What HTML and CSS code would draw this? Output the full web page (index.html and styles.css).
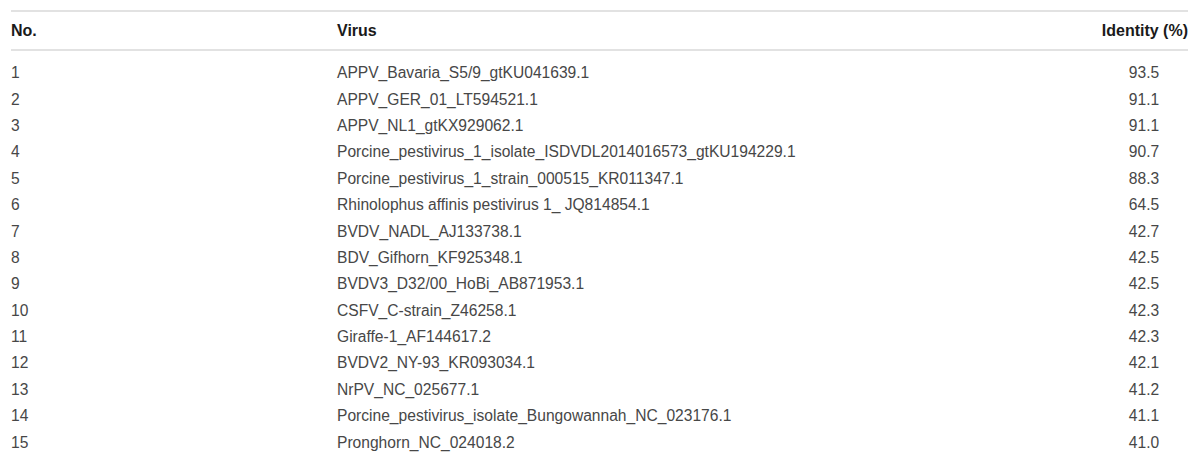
FILE: index.html
```html
<!DOCTYPE html>
<html>
<head>
<meta charset="utf-8">
<link rel="stylesheet" href="styles.css">
</head>
<body>
<table class="data">
  <colgroup>
    <col class="c-no">
    <col class="c-virus">
    <col class="c-id">
  </colgroup>
  <thead>
    <tr><th class="no">No.</th><th class="virus">Virus</th><th class="id">Identity (%)</th></tr>
  </thead>
  <tbody>
    <tr><td>1</td><td>APPV_Bavaria_S5/9_gtKU041639.1</td><td class="id">93.5</td></tr>
    <tr><td>2</td><td>APPV_GER_01_LT594521.1</td><td class="id">91.1</td></tr>
    <tr><td>3</td><td>APPV_NL1_gtKX929062.1</td><td class="id">91.1</td></tr>
    <tr><td>4</td><td>Porcine_pestivirus_1_isolate_ISDVDL2014016573_gtKU194229.1</td><td class="id">90.7</td></tr>
    <tr><td>5</td><td>Porcine_pestivirus_1_strain_000515_KR011347.1</td><td class="id">88.3</td></tr>
    <tr><td>6</td><td>Rhinolophus affinis pestivirus 1_ JQ814854.1</td><td class="id">64.5</td></tr>
    <tr><td>7</td><td>BVDV_NADL_AJ133738.1</td><td class="id">42.7</td></tr>
    <tr><td>8</td><td>BDV_Gifhorn_KF925348.1</td><td class="id">42.5</td></tr>
    <tr><td>9</td><td>BVDV3_D32/00_HoBi_AB871953.1</td><td class="id">42.5</td></tr>
    <tr><td>10</td><td>CSFV_C-strain_Z46258.1</td><td class="id">42.3</td></tr>
    <tr><td>11</td><td>Giraffe-1_AF144617.2</td><td class="id">42.3</td></tr>
    <tr><td>12</td><td>BVDV2_NY-93_KR093034.1</td><td class="id">42.1</td></tr>
    <tr><td>13</td><td>NrPV_NC_025677.1</td><td class="id">41.2</td></tr>
    <tr><td>14</td><td>Porcine_pestivirus_isolate_Bungowannah_NC_023176.1</td><td class="id">41.1</td></tr>
    <tr><td>15</td><td>Pronghorn_NC_024018.2</td><td class="id">41.0</td></tr>
  </tbody>
</table>
</body>
</html>
```

FILE: styles.css
```css
html, body {
  margin: 0;
  padding: 0;
  background: #ffffff;
}
body {
  padding: 10px 12px 0 11px;
  font-family: "Liberation Sans", Arial, Helvetica, sans-serif;
  color: #474747;
}
.data {
  width: 100%;
  border-collapse: collapse;
  table-layout: fixed;
  font-size: 15.6px;
}
.c-no { width: 326px; }
.c-id { width: 88px; }
.data thead tr {
  border-top: 2px solid #e2e2e2;
  border-bottom: 2px solid #e2e2e2;
}
.data th {
  height: 37px;
  padding: 0;
  font-size: 16px;
  font-weight: bold;
  color: #1a1a1a;
  text-align: left;
  vertical-align: middle;
}
.data th.id {
  text-align: right;
  white-space: nowrap;
}
.data td {
  height: 26.4px;
  padding: 0;
  vertical-align: middle;
  white-space: nowrap;
}
.data tbody tr:first-child td {
  padding-top: 9px;
}
.data td.id {
  text-align: center;
}
```
